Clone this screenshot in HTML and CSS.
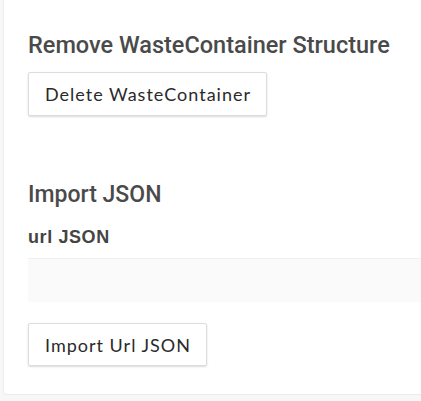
FILE: index.html
```html
<!DOCTYPE html>
<html>
<head>
<meta charset="utf-8">
<link rel="stylesheet" href="styles.css">
</head>
<body>
<div class="card">
  <section class="block">
    <h3 class="title">Remove WasteContainer Structure</h3>
    <button class="btn">Delete WasteContainer</button>
  </section>
  <section class="block import">
    <h3 class="title title-import">Import JSON</h3>
    <label class="label" for="url">url JSON</label>
    <input class="field" id="url" type="text">
    <button class="btn btn-short">Import Url JSON</button>
  </section>
</div>
</body>
</html>
```
FILE: styles.css
```css
html, body {
  margin: 0;
  padding: 0;
  background: #f7f7f7;
}
body {
  padding: 0 0 6px 3px;
  font-family: Roboto, "Liberation Sans", sans-serif;
}
.card {
  background: #fff;
  border-left: 1px solid #ececec;
  border-bottom: 1px solid #ececec;
  border-radius: 0 0 0 4px;
  padding: 31px 0 28px 24px;
}
.block {
  display: flex;
  flex-direction: column;
  align-items: flex-start;
}
.title {
  margin: 0 0 13px 0;
  font-size: 23.5px;
  line-height: 28px;
  font-weight: 500;
  color: #4a4a4a;
  white-space: nowrap;
}
.title-import {
  font-size: 23px;
  margin-bottom: 17px;
}
.import {
  margin-top: 65px;
}
.btn {
  font-family: Lato, "Open Sans", sans-serif;
  font-size: 18px;
  letter-spacing: 1px;
  color: #2a2a2a;
  background: #fff;
  border: 1px solid #ddd;
  border-radius: 2px;
  box-shadow: 0 1px 2px rgba(0,0,0,0.15);
  height: 44px;
  padding: 0 15px 0 16px;
  cursor: pointer;
}
.btn-short {
  height: 43px;
}
.label {
  font-family: "Liberation Sans", Arial, sans-serif;
  font-weight: bold;
  font-size: 18px;
  line-height: 22px;
  letter-spacing: 0.6px;
  color: #444;
  margin-bottom: 10px;
}
.field {
  box-sizing: border-box;
  width: 100%;
  height: 44px;
  border: none;
  border-top: 1px solid #f0f0f0;
  background: #fafafa;
  margin-bottom: 21px;
}
```
